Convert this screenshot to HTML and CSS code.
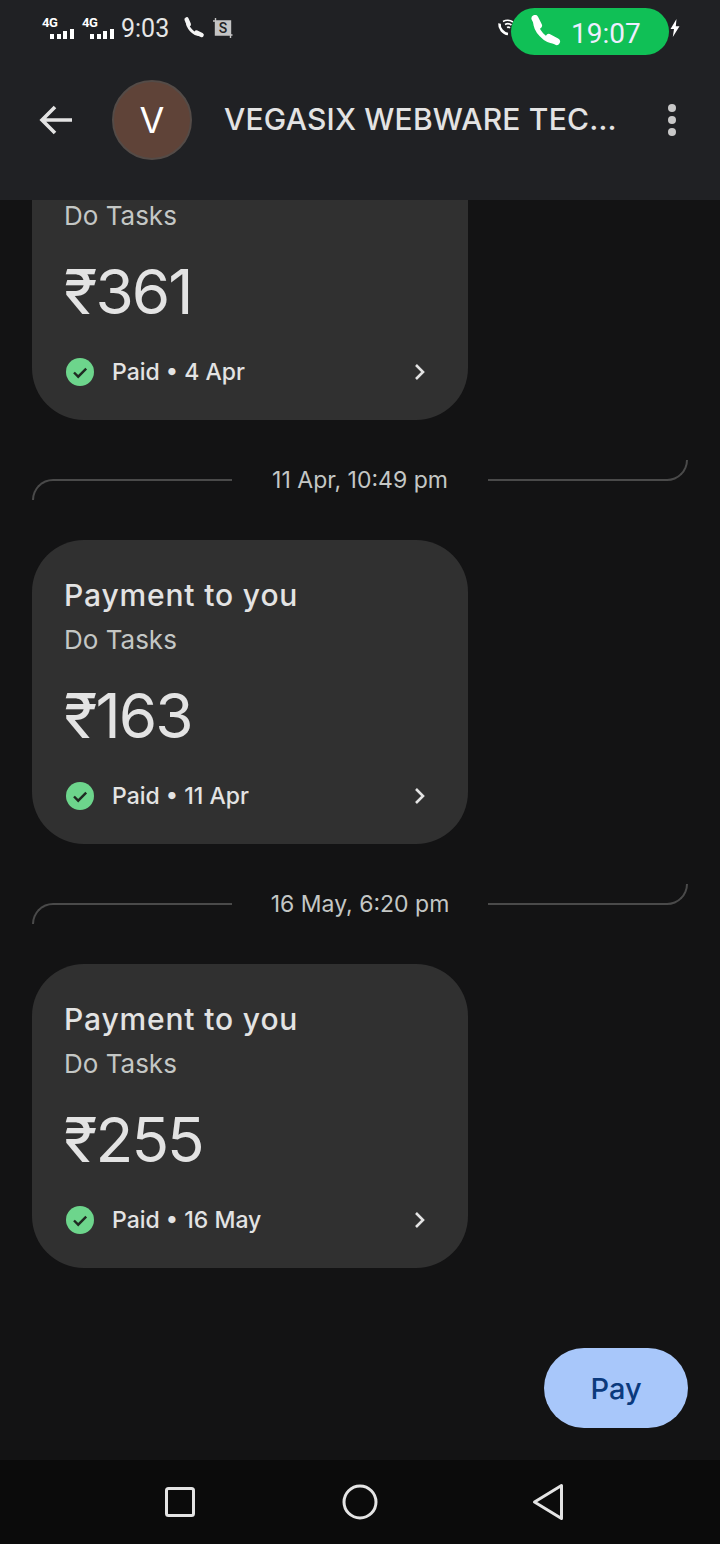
FILE: index.html
```html
<!DOCTYPE html>
<html lang="en">
<head>
  <meta charset="UTF-8">
  <title>VEGASIX WEBWARE TECHNOLOGIES</title>
  <link rel="stylesheet" href="styles.css">
</head>
<body>
  <div class="screen">
    <header class="top">
      <div class="status">
        <span class="net"><span class="net-label">4G</span><span class="bars"><i></i><i></i><i></i><i></i></span></span>
        <span class="net"><span class="net-label">4G</span><span class="bars"><i></i><i></i><i></i><i></i></span></span>
        <span class="clock">9:03</span>
        <svg class="status-call" viewBox="0 0 24 24"><path d="M6.200 5C5.600 11 12.500 19 19.500 18.600" fill="none" stroke="currentColor" stroke-width="2.800"/><path d="M5.600 3.400 7.800 8.400M15.500 16.600 20.600 19" fill="none" stroke="currentColor" stroke-width="4.400" stroke-linecap="round"/></svg>
        <svg class="status-shot" viewBox="0 0 22 22"><rect x="3.500" y="4" width="15" height="14" fill="#c4c4c4"/><path d="M3.500 1v17h17M1 4h17.500v17" fill="none" stroke="#c4c4c4" stroke-width="1.400"/><text x="11" y="16" text-anchor="middle" class="shot-s">S</text></svg>
        <svg class="status-wifi" viewBox="0 0 18 18"><path d="M2.500 4.500C2 9.500 6 14.500 11 15" fill="none" stroke="#fff" stroke-width="2.600"/><path d="M6 2.500A10 10 0 0 1 16 3M8 5.500A6 6 0 0 1 14.500 6M10 8.500A2.500 2.500 0 0 1 13 9" fill="none" stroke="#fff" stroke-width="1.600"/></svg>
        <svg class="status-bolt" viewBox="0 0 10 18"><path d="M6.500 0 0.500 10H4L2.800 18 9.500 7.200H5.800z" fill="#fff"/></svg>
      </div>
      <div class="toolbar">
        <svg class="back" viewBox="0 0 36 36"><path d="M34 18H4M17 5 4 18l13 13" fill="none" stroke="currentColor" stroke-width="3.600"/></svg>
        <div class="avatar">V</div>
        <div class="name">VEGASIX WEBWARE TECHNOLOGIES</div>
        <div class="more"><i></i><i></i><i></i></div>
      </div>
    </header>

    <div class="call-pill">
      <svg class="pill-phone" viewBox="0 0 32 32"><path d="M6.500 5.500C6 15 16 27 27 26.500" fill="none" stroke="#fff" stroke-width="4.600"/><path d="M6 3.500 9.500 10.500M20 22.500 27.500 26.500" fill="none" stroke="#fff" stroke-width="7" stroke-linecap="round"/></svg>
      <span class="pill-time">19:07</span>
    </div>

    <main class="feed">
      <div class="thread">
        <div class="card">
          <div class="card-title">Payment to you</div>
          <div class="card-note">Do Tasks</div>
          <div class="card-amount">₹361</div>
          <div class="card-status">
            <svg class="tick" viewBox="0 0 28 28"><circle cx="14" cy="14" r="14" fill="#6dd58c"/><path d="M8 14.500l4.200 4.200 8-8" fill="none" stroke="#1f2a22" stroke-width="2.400"/></svg>
            <span class="status-text">Paid • 4 Apr</span>
            <svg class="chev" viewBox="0 0 14 18"><path d="M3 2l7 7-7 7" fill="none" stroke="currentColor" stroke-width="2.600"/></svg>
          </div>
        </div>

        <div class="stamp">
          <div class="line line-left"></div>
          <div class="stamp-text">11 Apr, 10:49 pm</div>
          <div class="line line-right"></div>
        </div>

        <div class="card">
          <div class="card-title">Payment to you</div>
          <div class="card-note">Do Tasks</div>
          <div class="card-amount">₹163</div>
          <div class="card-status">
            <svg class="tick" viewBox="0 0 28 28"><circle cx="14" cy="14" r="14" fill="#6dd58c"/><path d="M8 14.500l4.200 4.200 8-8" fill="none" stroke="#1f2a22" stroke-width="2.400"/></svg>
            <span class="status-text">Paid • 11 Apr</span>
            <svg class="chev" viewBox="0 0 14 18"><path d="M3 2l7 7-7 7" fill="none" stroke="currentColor" stroke-width="2.600"/></svg>
          </div>
        </div>

        <div class="stamp">
          <div class="line line-left"></div>
          <div class="stamp-text">16 May, 6:20 pm</div>
          <div class="line line-right"></div>
        </div>

        <div class="card">
          <div class="card-title">Payment to you</div>
          <div class="card-note">Do Tasks</div>
          <div class="card-amount">₹255</div>
          <div class="card-status">
            <svg class="tick" viewBox="0 0 28 28"><circle cx="14" cy="14" r="14" fill="#6dd58c"/><path d="M8 14.500l4.200 4.200 8-8" fill="none" stroke="#1f2a22" stroke-width="2.400"/></svg>
            <span class="status-text">Paid • 16 May</span>
            <svg class="chev" viewBox="0 0 14 18"><path d="M3 2l7 7-7 7" fill="none" stroke="currentColor" stroke-width="2.600"/></svg>
          </div>
        </div>
      </div>
      <button class="pay">Pay</button>
    </main>

    <nav class="nav">
      <svg class="nav-square" viewBox="0 0 32 32"><rect x="2.500" y="2.500" width="27" height="27" rx="2" fill="none" stroke="currentColor" stroke-width="3"/></svg>
      <svg class="nav-circle" viewBox="0 0 36 36"><circle cx="18" cy="18" r="16" fill="none" stroke="currentColor" stroke-width="3"/></svg>
      <svg class="nav-back" viewBox="0 0 32 38"><path d="M29.500 2.500V35.500L2.500 19z" fill="none" stroke="currentColor" stroke-width="3" stroke-linejoin="round"/></svg>
    </nav>
  </div>
</body>
</html>
```

FILE: styles.css
```css
body {
  margin: 0;
  background-color: #131314;
  font-family: Inter, Roboto, sans-serif;
  color: #e3e3e3;
}
.screen {
  position: relative;
  width: 720px;
  height: 1544px;
  display: flex;
  flex-direction: column;
  overflow: hidden;
}
.top {
  flex: none;
  height: 200px;
  background-color: #202124;
  position: relative;
  z-index: 1;
}
.status {
  height: 56px;
  display: flex;
  align-items: center;
  padding-left: 42px;
  padding-right: 40px;
  color: #f1f1f1;
}
.net {
  width: 40px;
  height: 24px;
  position: relative;
  display: block;
}
.net-label {
  font-family: Roboto, sans-serif;
  font-size: 13px;
  line-height: 14px;
  font-weight: 700;
  letter-spacing: -0.5px;
  color: #fff;
  display: block;
}
.bars {
  position: absolute;
  left: 8px;
  bottom: 1px;
  display: flex;
  align-items: flex-end;
  gap: 2.500px;
}
.bars i {
  width: 4px;
  height: 5px;
  background-color: #fff;
}
.bars i:nth-child(3) { height: 8px; }
.bars i:nth-child(4) { height: 10px; }
.clock {
  font-family: Roboto, sans-serif;
  font-size: 25px;
  color: #e6e6e6;
  margin-left: -1px;
  margin-right: 12px;
}
.status-call {
  width: 24px;
  height: 24px;
  margin-right: 7px;
  color: #f4f4f4;
}
.status-shot {
  width: 22px;
  height: 22px;
}
.shot-s {
  font-family: Roboto, sans-serif;
  font-size: 14px;
  font-weight: 500;
  fill: #222;
}
.status-wifi {
  width: 18px;
  height: 18px;
  margin-left: auto;
}
.status-bolt {
  width: 10px;
  height: 18px;
  margin-left: 155px;
}
.toolbar {
  height: 128px;
  display: flex;
  align-items: center;
  padding-left: 38px;
  padding-right: 44px;
}
.back {
  width: 36px;
  height: 36px;
  margin-right: 38px;
  color: #e3e3e3;
  flex: none;
}
.avatar {
  width: 80px;
  height: 80px;
  box-sizing: border-box;
  border: 2px solid #544b47;
  border-radius: 50%;
  background-color: #5f4338;
  color: #fff;
  font-size: 36px;
  font-weight: 400;
  display: flex;
  align-items: center;
  justify-content: center;
  margin-right: 32px;
  flex: none;
}
.name {
  width: 393px;
  height: 40px;
  line-height: 39px;
  font-size: 30px;
  font-weight: 500;
  letter-spacing: 0.2px;
  white-space: nowrap;
  overflow: hidden;
  text-overflow: ellipsis;
  color: #e3e3e3;
}
.more {
  margin-left: auto;
  display: flex;
  flex-direction: column;
  gap: 4px;
}
.more i {
  width: 8px;
  height: 8px;
  border-radius: 50%;
  background-color: #c8c8c8;
}
.call-pill {
  position: absolute;
  z-index: 2;
  left: 511px;
  top: 8px;
  width: 158px;
  height: 47px;
  border-radius: 24px;
  background-color: #10c056;
  color: #eef;
  display: flex;
  align-items: center;
  box-sizing: border-box;
  padding-left: 18px;
  font-family: Roboto, sans-serif;
  font-size: 28px;
}
.pill-phone {
  width: 32px;
  height: 32px;
  margin-right: 10px;
  margin-top: -2px;
}
.pill-time {
  padding-top: 3px;
}
.feed {
  flex: 1;
  position: relative;
  overflow: hidden;
}
.thread {
  margin-top: -84px;
  padding: 0 32px;
}
.card {
  width: 436px;
  height: 304px;
  box-sizing: border-box;
  background-color: #303030;
  border-radius: 52px;
  padding: 33px 32px 28px;
}
.card-title {
  font-size: 30px;
  line-height: 44px;
  font-weight: 500;
  letter-spacing: 0.85px;
  color: #e3e3e3;
}
.card-note {
  font-size: 26px;
  line-height: 46px;
  color: #c4c7c5;
}
.card-amount {
  margin-top: 17px;
  font-size: 62px;
  line-height: 72px;
  letter-spacing: -2px;
  color: #e3e3e3;
}
.card-status {
  margin-top: 24px;
  height: 40px;
  display: flex;
  align-items: center;
}
.tick {
  width: 28px;
  height: 28px;
  margin-left: 2px;
  margin-right: 18px;
}
.status-text {
  font-size: 23px;
  font-weight: 500;
  color: #e3e3e3;
}
.chev {
  width: 14px;
  height: 18px;
  margin-left: auto;
  margin-right: 9px;
  color: #e3e3e3;
}
.stamp {
  height: 40px;
  margin: 40px 0;
  display: flex;
  align-items: center;
  width: 656px;
}
.stamp-text {
  width: 256px;
  text-align: center;
  font-size: 23px;
  color: #c4c7c5;
}
.line {
  flex: 1;
  height: 21px;
  box-sizing: border-box;
  border: 0 solid #4a4a4a;
}
.line-left {
  align-self: flex-end;
  border-top-width: 2px;
  border-left-width: 2px;
  border-top-left-radius: 26px;
}
.line-right {
  align-self: flex-start;
  border-bottom-width: 2px;
  border-right-width: 2px;
  border-bottom-right-radius: 26px;
}
.pay {
  position: absolute;
  left: 544px;
  bottom: 32px;
  width: 144px;
  height: 80px;
  border: none;
  border-radius: 40px;
  background-color: #a8c7fa;
  color: #0b3a7d;
  font-family: Inter, Roboto, sans-serif;
  font-size: 29px;
  font-weight: 500;
}
.nav {
  flex: none;
  height: 84px;
  background-color: #0b0b0b;
  color: #e4e4e4;
  display: flex;
  align-items: center;
  padding-left: 164px;
}
.nav-square {
  width: 32px;
  height: 32px;
  margin-right: 146px;
}
.nav-circle {
  width: 36px;
  height: 36px;
  margin-right: 154px;
}
.nav-back {
  width: 32px;
  height: 38px;
}
```
